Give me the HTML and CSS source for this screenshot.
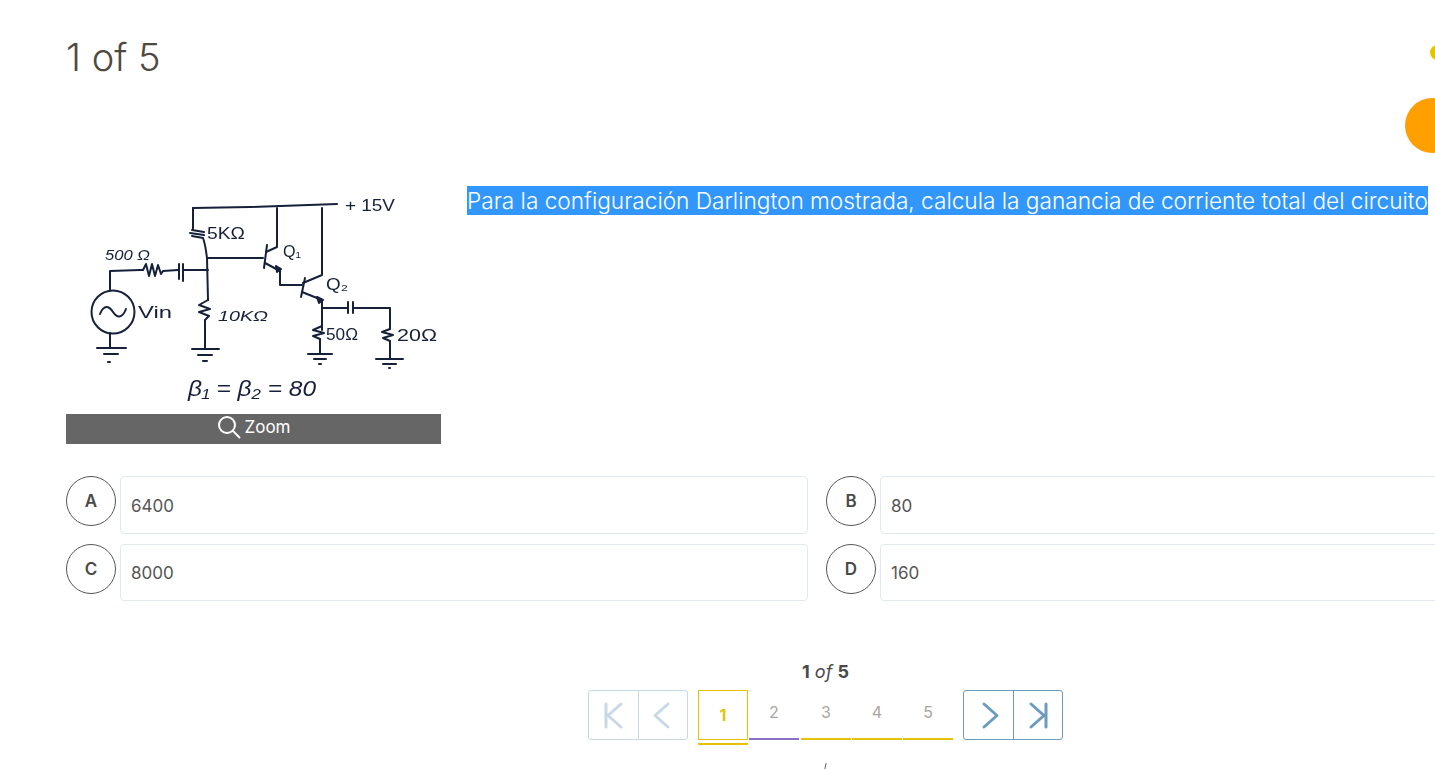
FILE: index.html
```html
<!DOCTYPE html>
<html lang="es">
<head>
<meta charset="UTF-8">
<meta name="viewport" content="width=device-width, initial-scale=1.0">
<title>1 of 5</title>
<link rel="stylesheet" href="styles.css">
</head>
<body>

<div class="dot-small"></div>
<div class="dot-big"></div>

<div class="quiz">
  <h1 class="quiz-title">1 of 5</h1>

  <div class="question">
    <div class="figure">
      <svg class="circuit" viewBox="66 180 375 234" width="375" height="234" aria-label="Circuito Darlington">
        <g class="wire">
          <path d="M193 208 L250 207 L337 204"/>
          <path d="M193 208 L193 229 M192 230 L204 232 M190 233 L204 235 M192 236 L203 238 M203 238 C205 243 206 250 207 258 L208 300"/>
          <path d="M208 300 L199 305 L210 309 L199 312 L209 316 L205 320 L205 348"/>
          <path d="M192 349 L219 349 M198 355 L212 355 M203 361 L207 361"/>
          <!-- Q1 -->
          <path d="M208 258 L263 258"/>
          <path d="M267 245 L264 268"/>
          <path d="M266 252 L277 247 L277 208"/>
          <path d="M265 263 L280 271 L280 285 L302 285"/>
          <path class="solid" d="M276 266 L281 269 L277 272 Z"/>
          <!-- Q2 -->
          <path d="M305 278 L301 297"/>
          <path d="M303 283 L322 275 L322 208"/>
          <path d="M302 292 L322 300 L322 330"/>
          <path class="solid" d="M317 297 L323 300 L319 303 Z"/>
          <path d="M322 308 L347 308 M348 302 L348 313 M353 302 L353 313 M353 308 L390 308 L390 329"/>
          <path d="M390 329 L382 332 L393 335 L383 338 L390 341 L390 358"/>
          <path d="M376 359 L403 359 M383 364 L396 364 M389 368 L390 368"/>
          <path d="M322 326 L313 330 L324 333 L313 336 L320 339 L320 353"/>
          <path d="M308 354 L332 354 M314 359 L326 359 M319 364 L321 364"/>
          <!-- entrada -->
          <circle cx="113" cy="312" r="21.5"/>
          <path d="M100 314 C104 304 109 306 113 312 C117 318 122 319 126 309"/>
          <path d="M110 290 L110 271 L140 270 L143 270 L146 264 L149 276 L152 264 L155 276 L158 265 L161 274 L163 271 L178 270"/>
          <path d="M179 264 L179 279 M183 264 L183 281 M183 270 L208 270"/>
          <path d="M110 333 L110 347 M97 348 L126 348 M104 354 L118 354 M108 362 L110 362"/>
        </g>
        <g class="hand">
          <text x="345" y="211" textLength="50" lengthAdjust="spacingAndGlyphs">+ 15V</text>
          <text x="207" y="239" textLength="38" lengthAdjust="spacingAndGlyphs">5KΩ</text>
          <text x="105" y="260" textLength="45" lengthAdjust="spacingAndGlyphs" class="hand-small">500 Ω</text>
          <text x="283" y="257" textLength="18" lengthAdjust="spacingAndGlyphs">Q₁</text>
          <text x="326" y="290" textLength="22" lengthAdjust="spacingAndGlyphs">Q₂</text>
          <text x="138" y="318" textLength="34" lengthAdjust="spacingAndGlyphs">Vin</text>
          <text x="218" y="321" textLength="50" lengthAdjust="spacingAndGlyphs" class="hand-small">10KΩ</text>
          <text x="326" y="340" textLength="32" lengthAdjust="spacingAndGlyphs">50Ω</text>
          <text x="397" y="341" textLength="40" lengthAdjust="spacingAndGlyphs">20Ω</text>
          <text x="188" y="396" textLength="128" lengthAdjust="spacingAndGlyphs" class="hand-big">β₁ = β₂ = 80</text>
        </g>
      </svg>
      <div class="zoom-bar">
        <svg class="zoom-icon" viewBox="0 0 24 24" width="24" height="24">
          <circle cx="10" cy="10" r="8"/>
          <path d="M15.500 15.500 L23 23"/>
        </svg>
        <span>Zoom</span>
      </div>
    </div>
    <p class="question-text"><span class="selected">Para la configuración Darlington mostrada, calcula la ganancia de corriente total del circuito</span></p>
  </div>

  <div class="options">
    <div class="option"><div class="letter">A</div><div class="answer">6400</div></div>
    <div class="option"><div class="letter">B</div><div class="answer">80</div></div>
    <div class="option"><div class="letter">C</div><div class="answer">8000</div></div>
    <div class="option"><div class="letter">D</div><div class="answer">160</div></div>
  </div>

  <div class="progress"><b>1</b> <i>of</i> <b>5</b></div>

  <div class="pager">
    <div class="pager-btns disabled">
      <button class="pager-btn"><svg viewBox="0 0 50 50" width="50" height="50"><path d="M17 14 V37 M32 14 L19 25.500 L32 37"/></svg></button>
      <button class="pager-btn"><svg viewBox="0 0 50 50" width="50" height="50"><path d="M30 14 L17 25.500 L30 37"/></svg></button>
    </div>
    <div class="pages">
      <div class="page active">1</div>
      <div class="page seen">2</div>
      <div class="page">3</div>
      <div class="page">4</div>
      <div class="page">5</div>
    </div>
    <div class="pager-btns">
      <button class="pager-btn"><svg viewBox="0 0 50 50" width="50" height="50"><path d="M20 14 L33 25.500 L20 37"/></svg></button>
      <button class="pager-btn"><svg viewBox="0 0 50 50" width="50" height="50"><path d="M33 14 V37 M18 14 L31 25.500 L18 37"/></svg></button>
    </div>
  </div>

  <div class="next-tick"></div>
</div>

</body>
</html>
```

FILE: styles.css
```css
html, body {
  height: 770px;
  overflow: hidden;
}

body {
  margin: 0;
  background: #fff;
  font-family: Inter, "Noto Sans", sans-serif;
  color: #4a4a4a;
}

.dot-small {
  position: absolute;
  left: 1430px;
  top: 45px;
  width: 15px;
  height: 15px;
  border-radius: 50%;
  background: #e6c300;
}

.dot-big {
  position: absolute;
  left: 1405px;
  top: 98px;
  width: 55px;
  height: 55px;
  border-radius: 50%;
  background: #ff9f00;
}

.quiz {
  width: 1650px;
  box-sizing: border-box;
  padding: 35px 65px 0 66px;
}

.quiz-title {
  margin: 0 0 101px;
  height: 44px;
  font-size: 38px;
  line-height: 44px;
  font-weight: 300;
  color: #4f4a3f;
}

.question {
  display: flex;
  gap: 26px;
}

.figure {
  flex: 0 0 375px;
}

.circuit {
  display: block;
  filter: blur(0.35px);
}

.wire path, .wire circle {
  fill: none;
  stroke: #16203a;
  stroke-width: 2;
  stroke-linecap: round;
  stroke-linejoin: round;
}

.wire path.solid {
  fill: #16203a;
}

.hand text {
  font-family: "Liberation Sans", sans-serif;
  font-size: 17px;
  fill: #16203a;
}

.hand text.hand-small {
  font-size: 14px;
  font-style: italic;
}

.hand text.hand-big {
  font-size: 22px;
  font-style: italic;
}

.zoom-bar {
  display: flex;
  align-items: center;
  justify-content: center;
  gap: 4px;
  height: 30px;
  box-sizing: border-box;
  padding-bottom: 5px;
  background: #666;
  color: #fff;
  font-size: 17px;
}

.zoom-icon {
  fill: none;
  stroke: #fff;
  stroke-width: 2;
}

.question-text {
  margin: 6px 0 0;
  font-size: 22.65px;
  line-height: 29px;
  font-weight: 300;
  white-space: nowrap;
}

.selected {
  padding: 1px 0;
  background: #3297fd;
  color: #fff;
}

.options {
  display: grid;
  grid-template-columns: 742px 742px;
  gap: 10px 18px;
  margin-top: 32px;
}

.option {
  display: flex;
  gap: 4px;
}

.letter {
  flex: 0 0 50px;
  height: 50px;
  box-sizing: border-box;
  display: flex;
  align-items: center;
  justify-content: center;
  border: 1px solid #555;
  border-radius: 50%;
  font-size: 17px;
  font-weight: 600;
}

.answer {
  flex: 1;
  box-sizing: border-box;
  height: 58px;
  padding: 18px 10px 0;
  border: 1px solid #dfe9f2;
  border-radius: 4px;
  font-size: 17px;
  line-height: 22px;
  color: #555;
}

.option:nth-child(n+3) .answer {
  height: 57px;
  padding-top: 17px;
}

.progress {
  margin-top: 59px;
  height: 24px;
  line-height: 24px;
  text-align: center;
  font-size: 18px;
}

.progress b {
  font-weight: 700;
}

.pager {
  display: flex;
  justify-content: center;
  gap: 10px;
  margin-top: 6px;
}

.pager-btns {
  display: flex;
  --pager-color: #6c9bc0;
}

.pager-btns.disabled {
  --pager-color: #c7d8e6;
}

.pager-btn {
  width: 51px;
  height: 50px;
  box-sizing: border-box;
  padding: 0;
  background: #fff;
  border: 1px solid var(--pager-color);
  display: flex;
  align-items: center;
  justify-content: center;
}

.pager-btn + .pager-btn {
  margin-left: -1px;
  width: 50px;
}

.pager-btn:first-child {
  border-radius: 3px 0 0 3px;
}

.pager-btn:last-child {
  border-radius: 0 3px 3px 0;
}

.pager-btn svg {
  flex: none;
  fill: none;
  stroke: var(--pager-color);
  stroke-width: 3;
  stroke-linecap: round;
  stroke-linejoin: round;
}

.pages {
  display: flex;
  gap: 1px;
}

.page {
  position: relative;
  width: 50px;
  height: 50px;
  box-sizing: border-box;
  padding-top: 11px;
  text-align: center;
  font-size: 16px;
  line-height: 22px;
  color: #aaa5a0;
  border-bottom: 2px solid #e6c300;
}

.page.seen {
  margin-right: 1px;
  border-bottom-color: #8a6fc4;
}

.page.active {
  border: 1px solid #e6c300;
  padding-top: 13px;
  color: #e6c300;
  font-weight: 700;
}

.page.active::after {
  content: "";
  position: absolute;
  left: -1px;
  right: -1px;
  bottom: -6px;
  height: 2px;
  background: #e6c300;
}

.next-tick {
  width: 1px;
  height: 6px;
  margin: 23px auto 0;
  background: #666;
  transform: skewX(-12deg);
}
```
